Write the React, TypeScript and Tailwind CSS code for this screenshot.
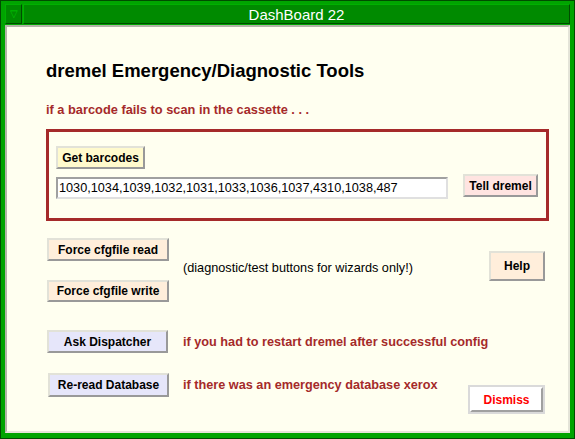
type BtnProps = {
  label: string;
  bg: string;
  className?: string;
  textClass?: string;
};

// raised Tk-style push button
const Btn = ({ label, bg, className = "", textClass = "text-black" }: BtnProps) => {
  return (
    <button
      className={`flex items-center justify-center border-2 border-t-[#e2e2d8] border-l-[#e2e2d8] border-b-[#999999] border-r-[#999999] text-[12px] font-bold leading-none ${bg} ${textClass} ${className}`}
    >
      {label}
    </button>
  );
};

const App = () => {
  return (
    <div className="w-[575px] h-[439px] bg-[#00a400] border border-[#004c00] px-[4px] pt-[3px] pb-[5px] flex flex-col font-['Liberation_Sans',sans-serif]">
      {/* title bar */}
      <div className="flex h-[20px] gap-px">
        <div className="w-[17px] bg-[#008a00] border border-t-[#00b000] border-l-[#00b000] border-b-[#004c00] border-r-[#004c00] flex items-center justify-center text-[#00c800] text-[10px] leading-none">
          ▽
        </div>
        <div className="flex-1 bg-[#008a00] border border-t-[#00b000] border-l-[#00b000] border-b-[#004c00] border-r-[#004c00] flex items-center justify-center text-white text-[15px] leading-none">
          DashBoard 22
        </div>
      </div>

      {/* window body */}
      <div className="flex-1 mt-px bg-[#fffff0] border-2 border-t-[#b4b4a8] border-l-[#b4b4a8] border-b-[#e4e4d8] border-r-[#e4e4d8] pl-[39px] pt-[34px] flex flex-col">
        <h1 className="text-[18.5px] leading-[20px] font-bold text-black">dremel Emergency/Diagnostic Tools</h1>
        <p className="mt-[21px] text-[12.8px] leading-[16px] font-bold text-[#a52a2a]">
          if a barcode fails to scan in the cassette . . .
        </p>

        <div className="mt-[11px] w-[503px] border-[3px] border-[#a52a2a] pl-[7px] pt-[14px] pb-[19px] flex flex-col">
          <Btn label="Get barcodes" bg="bg-[#fffacd]" className="w-[89px] h-[23px]" />
          <div className="mt-[5px] flex items-start gap-[15px]">
            <div className="mt-[3px] w-[392px] h-[22px] bg-white border-2 border-t-[#a0a0a0] border-l-[#a0a0a0] border-b-[#e0e0e0] border-r-[#e0e0e0] pl-px flex items-center text-[12.7px] leading-none text-black">
              1030,1034,1039,1032,1031,1033,1036,1037,4310,1038,487
            </div>
            <Btn label="Tell dremel" bg="bg-[#ffe4e1]" className="w-[75px] h-[23px]" />
          </div>
        </div>

        {/* config file buttons */}
        <div className="mt-[17px] ml-px w-[498px] flex items-start">
          <div className="flex flex-col gap-[19px]">
            <Btn label="Force cfgfile read" bg="bg-[#ffeedb]" className="w-[122px] h-[23px]" />
            <Btn label="Force cfgfile write" bg="bg-[#ffeedb]" className="w-[122px] h-[22px]" />
          </div>
          <span className="ml-[14px] mt-[22px] text-[12.7px] leading-[16px] text-black">
            (diagnostic/test buttons for wizards only!)
          </span>
          <Btn label="Help" bg="bg-[#ffeedb]" className="ml-auto mt-[13px] w-[56px] h-[30px]" />
        </div>

        <div className="mt-[28px] ml-px flex items-center">
          <Btn label="Ask Dispatcher" bg="bg-[#e6e6fa]" className="w-[121px] h-[23px]" />
          <span className="ml-[15px] text-[12.7px] leading-[16px] font-bold text-[#a52a2a]">
            if you had to restart dremel after successful config
          </span>
        </div>

        <div className="mt-[20px] ml-[2px] w-[497px] flex items-start">
          <div className="flex items-center">
            <Btn label="Re-read Database" bg="bg-[#e6e6fa]" className="w-[121px] h-[24px]" />
            <span className="ml-[14px] text-[12.7px] leading-[16px] font-bold text-[#a52a2a]">
              if there was an emergency database xerox
            </span>
          </div>
          <div className="ml-auto mt-[12px] border-2 border-[#dadada]">
            <button className="w-[73px] h-[25px] bg-white border-2 border-t-white border-l-white border-b-[#a0a0a0] border-r-[#a0a0a0] text-[12px] font-bold leading-none text-[#ff0000] flex items-center justify-center">
              Dismiss
            </button>
          </div>
        </div>
      </div>
    </div>
  );
};

export default App;
